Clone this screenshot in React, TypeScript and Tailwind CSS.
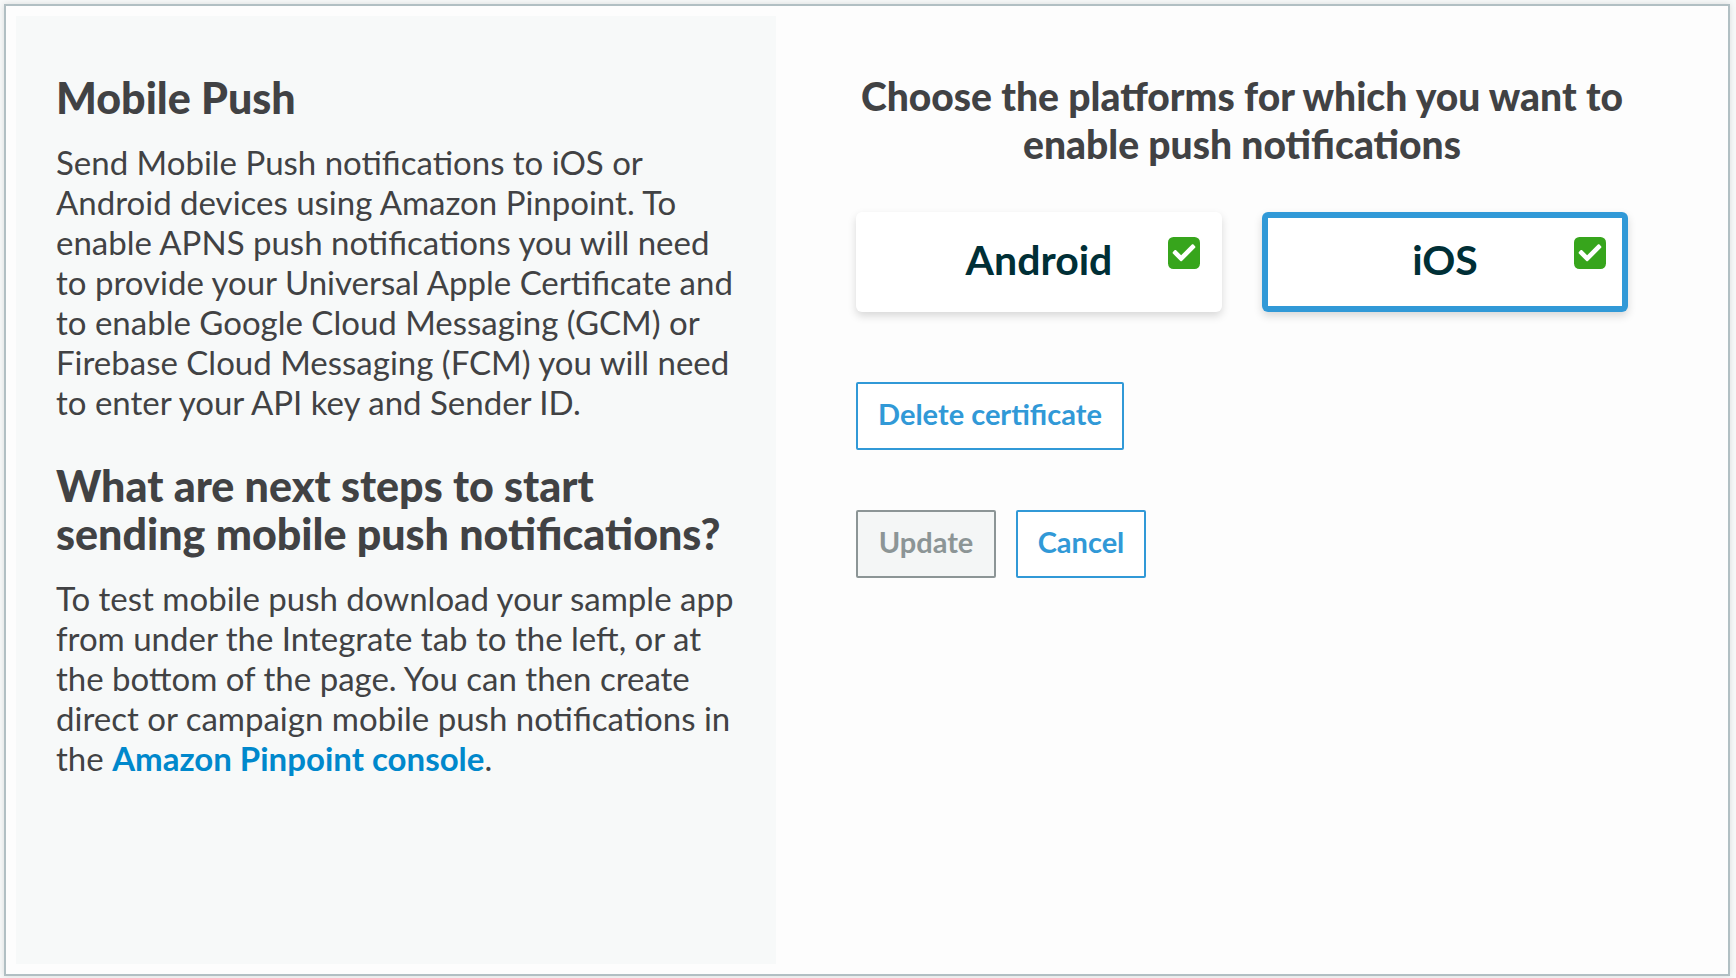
import { useState } from "react";

function CheckSquare() {
  return (
    <svg viewBox="0 32 448 448" className="absolute top-[25px] right-[22px] size-8" aria-hidden="true">
      <rect y="32" width="448" height="448" rx="76" fill="#37a51c" />
      <path
        fill="#ffffff"
        transform="translate(0 -14)"
        d="M195.314 381.941l184-184c6.248-6.248 6.248-16.379 0-22.627l-22.627-22.627c-6.248-6.248-16.379-6.249-22.628 0L184 302.745l-70.059-70.059c-6.248-6.248-16.379-6.248-22.628 0l-22.627 22.627c-6.248 6.248-6.248 16.379 0 22.627l104 104c6.249 6.25 16.379 6.251 22.628.001z"
      />
    </svg>
  );
}

const platforms = ["Android", "iOS"];

export default function App() {
  const [selected, setSelected] = useState("iOS");

  return (
    <div className="flex min-h-screen bg-[#f7f9f9] pt-1 pr-1.5 pb-0.5 pl-1 font-['Lato',sans-serif] text-[#414244]">
      <main className="grid flex-1 grid-cols-[760fr_942fr] border-2 border-[#b1bfc3] bg-[#fdfdfd] p-2.5 shadow-[0_0_6px_rgba(0,0,0,0.12)]">
        <section className="bg-[#f7f9f9] px-10 pt-[58px] text-[33px] leading-10">
          <h1 className="text-[43px] leading-12 font-black">Mobile Push</h1>
          <p className="mt-5">
            Send Mobile Push notifications to iOS or
            <br />
            Android devices using Amazon Pinpoint. To
            <br />
            enable APNS push notifications you will need
            <br />
            to provide your Universal Apple Certificate and
            <br />
            to enable Google Cloud Messaging (GCM) or
            <br />
            Firebase Cloud Messaging (FCM) you will need
            <br />
            to enter your API key and Sender ID.
          </p>
          <h2 className="mt-10 text-[43px] leading-12 font-black">
            What are next steps to start
            <br />
            sending mobile push notifications?
          </h2>
          <p className="mt-5">
            To test mobile push download your sample app
            <br />
            from under the Integrate tab to the left, or at
            <br />
            the bottom of the page. You can then create
            <br />
            direct or campaign mobile push notifications in
            <br />
            the{" "}
            <a href="#pinpoint" className="font-bold text-[#0088cc]">
              Amazon Pinpoint console
            </a>
            .
          </p>
        </section>

        <section className="pt-14 pr-[90px] pl-20">
          <h2 className="-mx-4 text-center text-[39px] leading-12 font-black">
            Choose the platforms for which you want to
            <br />
            enable push notifications
          </h2>
          <div className="mt-11 grid grid-cols-2 gap-10">
            {platforms.map((name) => (
              <button
                key={name}
                type="button"
                aria-pressed={selected === name}
                onClick={() => setSelected(name)}
                className={`relative h-[100px] rounded-md bg-white pb-1 text-[41px] leading-12 font-bold text-[#002f36] shadow-[0_4px_8px_rgba(0,0,0,0.15)] ${
                  selected === name ? "inset-ring-6 inset-ring-[#3199d7]" : ""
                }`}
              >
                {name}
                <CheckSquare />
              </button>
            ))}
          </div>
          <button type="button" className="mt-[70px] block h-[68px] w-[268px] rounded-xs border-2 border-[#3199d7] bg-white pb-1 text-[29px] leading-8 font-bold text-[#3199d7]">
            Delete certificate
          </button>
          <div className="mt-[60px] flex gap-5 text-[29px] leading-8 font-bold">
            <button type="button" disabled className="h-[68px] w-[140px] rounded-xs border-2 border-[#8c9596] bg-[#f4f6f6] pb-1 text-[#8c9596]">
              Update
            </button>
            <button type="button" className="h-[68px] w-[130px] rounded-xs border-2 border-[#3199d7] bg-white pb-1 text-[#3199d7]">
              Cancel
            </button>
          </div>
        </section>
      </main>
    </div>
  );
}
